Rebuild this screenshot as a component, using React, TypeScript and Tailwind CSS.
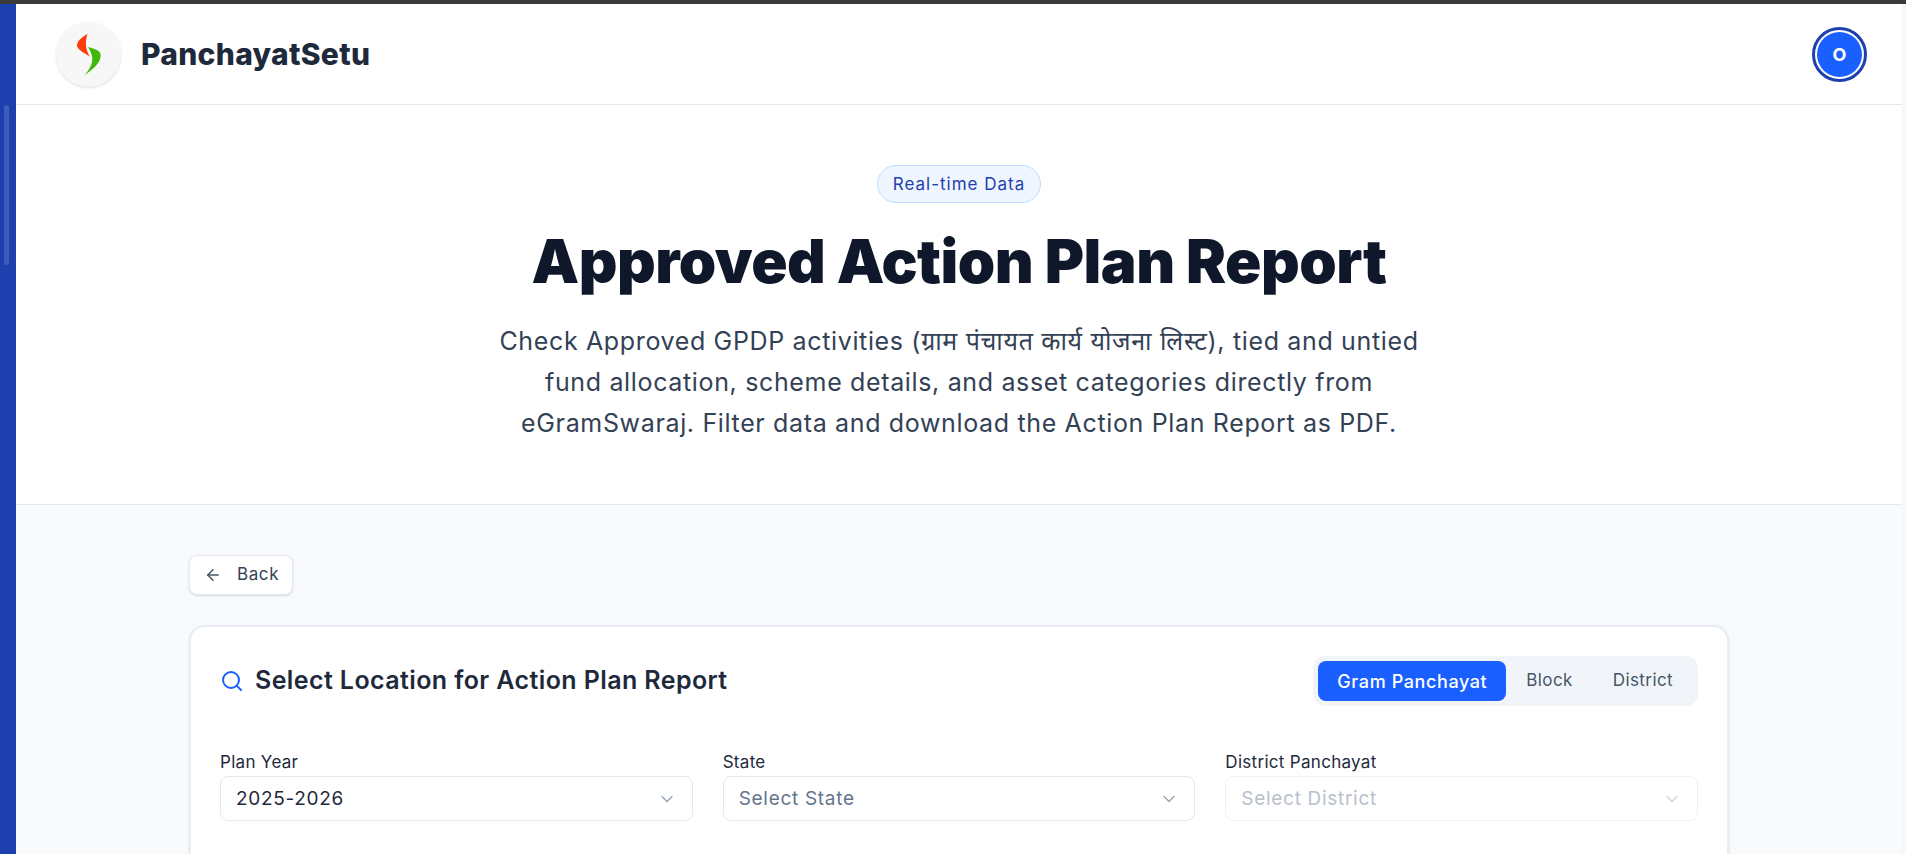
import { ArrowLeft, ChevronDown, Search } from 'lucide-react';

const FONT = "font-['Inter','Noto_Sans',sans-serif]";

function SelectField({ label, value, tone }: { label: string; value: string; tone: 'filled' | 'empty' | 'disabled' }) {
  const disabled = tone === 'disabled';
  return (
    <div className="flex flex-col">
      <label className="mb-[3px] h-[20px] text-[17px] leading-[18px] tracking-[0.3px] text-[#1e293b]">{label}</label>
      <div
        className={`flex h-[45px] items-center justify-between rounded-lg border bg-white pl-[15px] pr-[15px] text-[19px] tracking-[0.7px] ${
          disabled ? 'border-[#eef1f5] text-[#b8c0cc]' : 'border-[#e2e8f0]'
        } ${tone === 'filled' ? 'text-[#1e293b]' : ''} ${tone === 'empty' ? 'text-[#64748b]' : ''}`}
      >
        <span className="pt-[2px]">{value}</span>
        <ChevronDown strokeWidth={1.5} className={`h-5 w-5 ${disabled ? 'text-[#cbd5e1]' : 'text-[#94a3b8]'}`} />
      </div>
    </div>
  );
}

export default function App() {
  return (
    <div className={`flex h-[854px] w-full flex-col overflow-hidden bg-white ${FONT}`}>
      <div className="h-[4px] shrink-0 bg-[#3a3a3a]" />
      <div className="flex min-h-0 flex-1">
        {/* side rail */}
        <div className="relative w-[16px] shrink-0 bg-[#1e40af]">
          <div className="absolute left-[4px] top-[101px] h-[160px] w-[5px] rounded bg-white/15" />
        </div>

        <div className="flex min-w-0 flex-1 flex-col">
          <header className="flex h-[101px] shrink-0 items-center justify-between border-b border-[#e2e8f0] pl-[40px] pr-[35px]">
            <div className="flex items-center gap-[20px]">
              <div className="flex h-[65px] w-[65px] items-center justify-center rounded-full bg-[#f7f7f7] shadow-sm">
                <svg width="28" height="47" viewBox="75 50 85 140">
                  <path d="M113 57C100 66 82 76 81 92C80 105 105 115 120 127C108 105 104 85 113 57Z" fill="#fb3c0b" />
                  <path d="M115 97C130 102 153 106 153 122C153 150 120 170 103 184C118 165 130 150 127 128C125 115 120 108 115 97Z" fill="#3fb80a" />
                </svg>
              </div>
              <span className="text-[30px] font-extrabold tracking-[0.3px] text-[#1e293b]">PanchayatSetu</span>
            </div>
            <div className="flex h-[55px] w-[55px] items-center justify-center rounded-full border-[3px] border-[#1e40af] bg-white">
              <div className="flex h-[45px] w-[45px] items-center justify-center rounded-full bg-[#1a5fff] text-[18px] font-bold text-white">
                O
              </div>
            </div>
          </header>

          <section className="flex h-[400px] shrink-0 flex-col items-center border-b border-[#e2e8f0] pt-[60px]">
            <span className="rounded-full border border-[#bfdbfe] bg-[#eff6ff] px-[15px] py-[7px] text-[17px] leading-[22px] tracking-[1px] text-[#1e40af]">
              Real-time Data
            </span>
            <h1 className="mt-[22px] text-[60px] font-black leading-[72px] tracking-[-0.5px] text-[#0f172a]">
              Approved Action Plan Report
            </h1>
            <p className="mt-[24px] w-[1000px] text-center text-[25px] leading-[41px] tracking-[0.65px] text-[#334155]">
              Check Approved GPDP activities (ग्राम पंचायत कार्य योजना लिस्ट), tied and untied
              <br />
              fund allocation, scheme details, and asset categories directly from
              <br />
              eGramSwaraj. Filter data and download the Action Plan Report as PDF.
            </p>
          </section>

          <main className="min-h-0 flex-1 overflow-hidden bg-[#f8fafc] pl-[173px] pr-[173px] pt-[50px]">
            <button className="flex h-[40px] w-[104px] items-center gap-[15px] rounded-lg border border-[#e2e8f0] bg-white pl-[14px] text-[17px] tracking-[0.6px] text-[#334155] shadow-sm">
              <ArrowLeft className="h-[18px] w-[18px] text-[#475569]" />
              Back
            </button>

            <div className="mt-[30px] rounded-t-2xl border-2 border-[#e8edf3] bg-white px-[29px] pb-[120px] pt-[29px] shadow-sm">
              <div className="flex items-center justify-between">
                <div className="flex items-center gap-[11px]">
                  <Search className="h-[24px] w-[24px] text-[#1a5fff]" />
                  <h2 className="text-[25px] font-semibold tracking-[0.4px] text-[#1e293b]">Select Location for Action Plan Report</h2>
                </div>
                <div className="flex h-[50px] items-center rounded-xl bg-[#f1f5f9] p-[5px]">
                  <div className="flex h-[40px] items-center rounded-lg bg-[#1a5fff] px-[19px] text-[18px] font-medium tracking-[0.6px] text-white">
                    Gram Panchayat
                  </div>
                  <div className="flex h-[40px] items-center px-[20px] text-[17px] tracking-[0.4px] text-[#475569]">Block</div>
                  <div className="flex h-[40px] items-center px-[20px] text-[17px] tracking-[0.4px] text-[#475569]">District</div>
                </div>
              </div>

              <div className="mt-[47px] grid grid-cols-3 gap-[30px]">
                <SelectField label="Plan Year" value="2025-2026" tone="filled" />
                <SelectField label="State" value="Select State" tone="empty" />
                <SelectField label="District Panchayat" value="Select District" tone="disabled" />
              </div>
            </div>
          </main>
        </div>

        <div className="w-[4px] shrink-0 bg-[#f6f7f8]" />
      </div>
    </div>
  );
}
